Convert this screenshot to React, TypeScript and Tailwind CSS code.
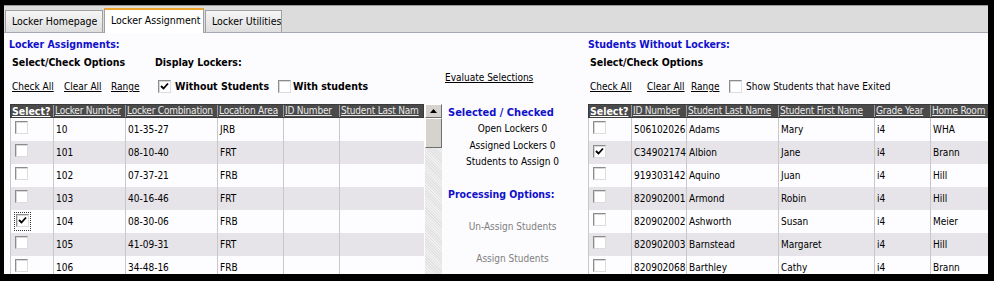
import React from 'react';

const leftCols = [
    { label: 'Select?', w: 'w-[42px]', bold: true },
    { label: 'Locker Number', w: 'w-[72px]' },
    { label: 'Locker Combination', w: 'w-[92px]' },
    { label: 'Location Area', w: 'w-[66px]' },
    { label: 'ID Number', w: 'w-[56px]' },
    { label: 'Student Last Nam', w: 'w-[84px]' },
];

const rightCols = [
    { label: 'Select?', w: 'w-[42px]', bold: true },
    { label: 'ID Number', w: 'w-[55px]' },
    { label: 'Student Last Name', w: 'w-[92px]' },
    { label: 'Student First Name', w: 'w-[96px]' },
    { label: 'Grade Year', w: 'w-[56px]' },
    { label: 'Home Room', w: 'w-[59px]' },
];

const lockers = [
    { checked: false, cells: ['10', '01-35-27', 'JRB', '', ''] },
    { checked: false, cells: ['101', '08-10-40', 'FRT', '', ''] },
    { checked: false, cells: ['102', '07-37-21', 'FRB', '', ''] },
    { checked: false, cells: ['103', '40-16-46', 'FRT', '', ''] },
    { checked: true, focus: true, cells: ['104', '08-30-06', 'FRB', '', ''] },
    { checked: false, cells: ['105', '41-09-31', 'FRT', '', ''] },
    { checked: false, cells: ['106', '34-48-16', 'FRB', '', ''] },
];

const students = [
    { checked: false, cells: ['506102026', 'Adams', 'Mary', 'i4', 'WHA'] },
    { checked: true, cells: ['C34902174', 'Albion', 'Jane', 'i4', 'Brann'] },
    { checked: false, cells: ['919303142', 'Aquino', 'Juan', 'i4', 'Hill'] },
    { checked: false, cells: ['820902001', 'Armond', 'Robin', 'i4', 'Hill'] },
    { checked: false, cells: ['820902002', 'Ashworth', 'Susan', 'i4', 'Meier'] },
    { checked: false, cells: ['820902003', 'Barnstead', 'Margaret', 'i4', 'Hill'] },
    { checked: false, cells: ['820902068', 'Barthley', 'Cathy', 'i4', 'Brann'] },
];

const Box: React.FC<{ checked?: boolean }> = ({ checked }) => (
    <span className="inline-flex w-[13px] h-[13px] shrink-0 bg-white border border-t-[#8c8c8c] border-l-[#8c8c8c] border-b-[#dcdcdc] border-r-[#dcdcdc] shadow-[inset_1px_1px_0_#d8d8d8] items-center justify-center">
        {checked && (
            <svg width="9" height="9" viewBox="0 0 9 9">
                <path d="M1 4 L3.5 6.5 L8 1.5" stroke="#000" strokeWidth="1.8" fill="none" />
            </svg>
        )}
    </span>
);

type Col = { label: string; w: string; bold?: boolean };
type Row = { checked: boolean; focus?: boolean; cells: string[] };

const Grid: React.FC<{ cols: Col[]; rows: Row[] }> = ({ cols, rows }) => (
    <div className="flex flex-col">
        <div className="flex shrink-0 h-[14px] bg-[#4a4a4a] border border-[#3a3a3a]">
            {cols.map((c, i) => (
                <div
                    key={c.label}
                    className={`${c.w} shrink-0 ${i > 0 ? 'border-l border-[#9a9a9a]' : ''} pl-[1px] leading-[12px] underline whitespace-nowrap overflow-hidden ${c.bold ? 'font-bold text-white text-[10.5px]' : 'text-[#e8e8e8] tracking-[-0.2px]'}`}
                >
                    {c.label}
                </div>
            ))}
        </div>
        {rows.map((r, ri) => (
            <div key={ri} className={`flex shrink-0 h-[23px] ${ri % 2 === 1 ? 'bg-[#e6e4e8]' : 'bg-[#fdfcfe]'} border-l border-[#c8c8c8]`}>
                <div className={`${cols[0].w} shrink-0 flex items-center pl-[3px]`}>
                    {r.focus ? (
                        <span className="border border-dotted border-[#333] p-px">
                            <Box checked={r.checked} />
                        </span>
                    ) : (
                        <span className="pl-px">
                            <Box checked={r.checked} />
                        </span>
                    )}
                </div>
                {r.cells.map((cell, ci) => (
                    <div key={ci} className={`${cols[ci + 1].w} shrink-0 border-l border-[#c8c8c8] pl-[2px] flex items-center whitespace-nowrap overflow-hidden text-black`}>
                        {cell}
                    </div>
                ))}
            </div>
        ))}
    </div>
);

const Tab: React.FC<{ label: string; active?: boolean; w: string }> = ({ label, active, w }) => (
    <div
        className={`${w} shrink-0 flex items-center pl-[6px] text-[10.5px] whitespace-nowrap overflow-hidden border border-[#a0a0a0] border-b-0 ${
            active
                ? 'h-[25px] bg-white border-t-2 border-t-[#f0a52c] -mb-px pb-px'
                : 'h-[22px] bg-gradient-to-b from-[#f6f6f6] to-[#dedede]'
        }`}
    >
        {label}
    </div>
);

export default function App() {
    return (
        <div className="w-[994px] h-[281px] bg-black border-l-4 border-t-[5px] border-r-[6px] border-b-[7px] border-black font-['DejaVu_Sans_Condensed','Liberation_Sans',sans-serif] text-[10px] text-black overflow-hidden">
            <div className="w-full h-full flex flex-col bg-[#fcfbfe] overflow-hidden">
                {/* tabs */}
                <div className="h-[28px] shrink-0 bg-[#dcdcdc] border-t border-[#9a9a9a] border-b border-b-[#a4a8b0] flex items-end pl-[1px] gap-[1px]">
                    <Tab label="Locker Homepage" w="w-[98px]" />
                    <Tab label="Locker Assignment" w="w-[100px]" active />
                    <Tab label="Locker Utilities" w="w-[77px]" />
                </div>

                <div className="flex flex-1 min-h-0">
                    {/* left */}
                    <div className="w-[436px] shrink-0 flex flex-col">
                        <div className="h-[24px] shrink-0 flex items-center pl-[5px] font-bold text-[10.5px] text-[#1010cc]">Locker Assignments:</div>
                        <div className="h-[12px] shrink-0 flex items-center font-bold text-[10.5px]">
                            <span className="w-[151px] pl-[8px]">Select/Check Options</span>
                            <span>Display Lockers:</span>
                        </div>
                        <div className="h-[35px] shrink-0 flex items-center">
                            <span className="pl-[8px] w-[60px] underline">Check All</span>
                            <span className="w-[47px] underline">Clear All</span>
                            <span className="w-[47px] underline">Range</span>
                            <Box checked />
                            <span className="ml-[4px] w-[103px] font-bold text-[10.5px]">Without Students</span>
                            <Box />
                            <span className="ml-[2px] font-bold text-[10.5px]">With students</span>
                        </div>
                        <div className="flex shrink-0 pl-[6px] gap-[1px]">
                            <Grid cols={leftCols} rows={lockers} />
                            <div className="w-[17px] shrink-0 flex flex-col bg-[#e8e8e8] bg-[repeating-linear-gradient(45deg,#e2e2e2_0,#e2e2e2_1px,#f0f0f0_1px,#f0f0f0_2px)]">
                                <div className="h-[14px] shrink-0 bg-[#d6d3ce] border border-t-white border-l-white border-b-[#6e6e6e] border-r-[#6e6e6e] flex items-center justify-center">
                                    <svg width="7" height="4" viewBox="0 0 7 4">
                                        <path d="M0 4 L3.5 0 L7 4 Z" fill="#000" />
                                    </svg>
                                </div>
                                <div className="h-[30px] shrink-0 bg-[#d6d3ce] border border-t-white border-l-white border-b-[#6e6e6e] border-r-[#6e6e6e]" />
                            </div>
                        </div>
                    </div>

                    {/* middle */}
                    <div className="w-[145px] shrink-0 flex flex-col">
                        <div className="mt-[38px] shrink-0 h-[14px] leading-[14px] pl-[5px] underline">Evaluate Selections</div>
                        <div className="mt-[21px] shrink-0 h-[14px] leading-[14px] pl-[8px] font-bold text-[#1010cc] text-[11px]">Selected / Checked</div>
                        <div className="mt-[1px] shrink-0 flex flex-col items-center">
                            <div className="h-[16.5px] leading-[16px]">Open Lockers 0</div>
                            <div className="h-[16.5px] leading-[16px]">Assigned Lockers 0</div>
                            <div className="h-[16.5px] leading-[16px]">Students to Assign 0</div>
                        </div>
                        <div className="mt-[16px] shrink-0 h-[14px] leading-[14px] pl-[8px] font-bold text-[#1010cc] text-[10.5px]">Processing Options:</div>
                        <div className="mt-[19px] shrink-0 h-[14px] leading-[14px] text-center text-[#808080]">Un-Assign Students</div>
                        <div className="mt-[18px] shrink-0 h-[14px] leading-[14px] text-center text-[#808080]">Assign Students</div>
                    </div>

                    {/* right */}
                    <div className="flex-1 flex flex-col">
                        <div className="h-[24px] shrink-0 flex items-center pl-[3px] font-bold text-[10.5px] text-[#1010cc]">Students Without Lockers:</div>
                        <div className="h-[12px] shrink-0 flex items-center font-bold text-[10.5px] pl-[5px]">Select/Check Options</div>
                        <div className="h-[35px] shrink-0 flex items-center">
                            <span className="pl-[5px] w-[62px] underline">Check All</span>
                            <span className="w-[44px] underline">Clear All</span>
                            <span className="w-[38px] underline">Range</span>
                            <Box />
                            <span className="ml-[4px]">Show Students that have Exited</span>
                        </div>
                        <div className="pl-[3px] shrink-0">
                            <Grid cols={rightCols} rows={students} />
                        </div>
                    </div>
                </div>
            </div>
        </div>
    );
}
